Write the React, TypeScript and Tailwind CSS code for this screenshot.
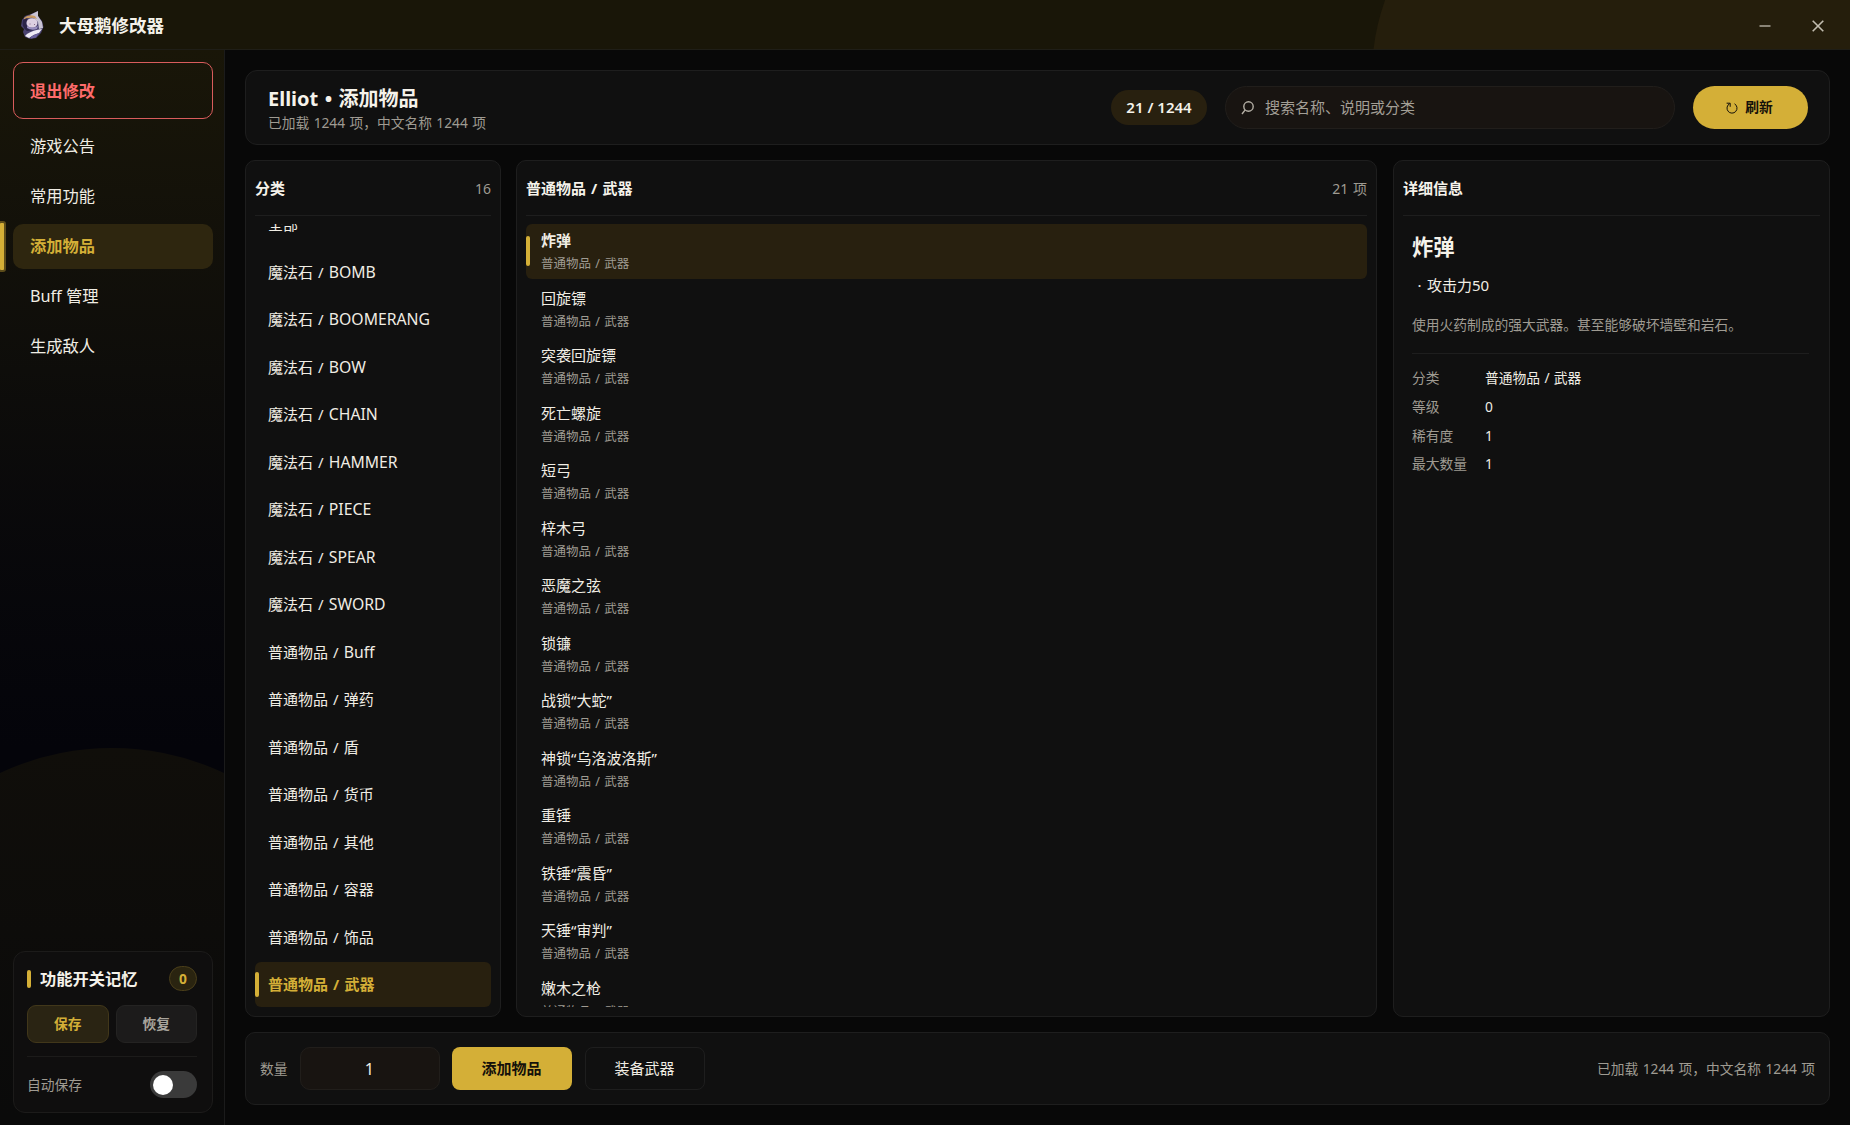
import { useState } from 'react';
import clsx from 'clsx';

const NAV_ITEMS = ['游戏公告', '常用功能', '添加物品', 'Buff 管理', '生成敌人'];

const CATEGORIES = [
  '全部',
  '魔法石 / BOMB',
  '魔法石 / BOOMERANG',
  '魔法石 / BOW',
  '魔法石 / CHAIN',
  '魔法石 / HAMMER',
  '魔法石 / PIECE',
  '魔法石 / SPEAR',
  '魔法石 / SWORD',
  '普通物品 / Buff',
  '普通物品 / 弹药',
  '普通物品 / 盾',
  '普通物品 / 货币',
  '普通物品 / 其他',
  '普通物品 / 容器',
  '普通物品 / 饰品',
  '普通物品 / 武器',
];

const ITEMS = [
  '炸弹',
  '回旋镖',
  '突袭回旋镖',
  '死亡螺旋',
  '短弓',
  '梓木弓',
  '恶魔之弦',
  '锁镰',
  '战锁“大蛇”',
  '神锁“乌洛波洛斯”',
  '重锤',
  '铁锤“震昏”',
  '天锤“审判”',
  '嫩木之枪',
];

const DETAILS = [
  { label: '分类', value: '普通物品 / 武器' },
  { label: '等级', value: '0' },
  { label: '稀有度', value: '1' },
  { label: '最大数量', value: '1' },
];

function Logo() {
  return (
    <svg viewBox="0 0 24 28" className="h-[28px] w-[24px]">
      <path d="M5 5 L11 3 L18 0 L18 5 L22 10 L23.500 16 L21 22 L16 27 L10 28 L5 26 L3 21 L4 18 L1 15 L2 9 Z" fill="#4a4270" />
      <path d="M10 4 L18 0 L18 5 L22 11 L23 17 L19 18 L18 11 L14 7 Z" fill="#c9c4d4" />
      <path d="M4 7 Q8 3 15 5 L17 8 Q10 5 4 9 Z" fill="#c79a62" />
      <path d="M3 9 Q7 6 8 8 L6 13 Q8 18 14 19 L7 20 Q1 16 3 9 Z" fill="#2b2448" />
      <ellipse cx="12" cy="12" rx="5.500" ry="4.800" fill="#ddd0e2" />
      <path d="M9.500 13 H10.500 M14 13.500 H15" stroke="#8a6d88" strokeWidth="1" />
      <path d="M7 15 Q12 18 18 15 L17 18 Q11 20 7 17 Z" fill="#9a8fc0" />
      <path d="M7 23 Q13 19 22 18 L19 22 Q14 23 9 27 L5 25 Z" fill="#eeebf5" />
      <path d="M11 25.500 L19 22 L16 26.500 L11 27.500 Z" fill="#6d64a0" />
    </svg>
  );
}

function TitleBar() {
  return (
    <header className="relative flex h-[50px] shrink-0 items-center justify-between overflow-hidden border-b border-[#1f1e17] bg-[#191608] pl-5">
      <div className="absolute top-[-182px] left-[1372px] h-[514px] w-[600px] rounded-[50%] bg-[#251e0c]" />
      <div className="relative flex items-center gap-[15px]">
        <Logo />
        <h1 className="pt-[2px] text-[17.5px] leading-none font-bold text-[#f5f2ea]">大母鹅修改器</h1>
      </div>
      <div className="relative flex h-full items-center pt-[2px]">
        <button className="flex h-full w-[40px] items-center justify-center">
          <svg viewBox="0 0 12 12" className="size-3" stroke="#c2bdb0" strokeWidth="1.3">
            <path d="M0.500 6 H11.500" />
          </svg>
        </button>
        <button className="flex h-full w-[65px] items-center justify-center">
          <svg viewBox="0 0 12 12" className="size-3" stroke="#c2bdb0" strokeWidth="1.6">
            <path d="M0.700 0.700 L11.300 11.300 M11.300 0.700 L0.700 11.300" />
          </svg>
        </button>
      </div>
    </header>
  );
}

function MemoryCard() {
  const [autoSave, setAutoSave] = useState(false);

  return (
    <div className="relative flex h-[162px] flex-col rounded-[12px] border border-[#1c1b1a] bg-[#0f0e0e] pt-[14px] pr-[15px] pl-[13px]">
      <div className="flex h-[25px] items-center">
        <span className="h-[18px] w-1 rounded-[2px] bg-[#d4af37]" />
        <span className="ml-[9px] pt-[2px] text-[16.25px] leading-none font-bold text-[#f5f2ea]">功能开关记忆</span>
        <span className="ml-auto flex h-[25px] w-7 items-center justify-center rounded-full border border-[#4a3e1a] bg-[#2a2410] text-[13.75px] leading-none font-bold text-[#d4af37]">
          0
        </span>
      </div>
      <div className="mt-[14px] flex gap-[7px]">
        <button className="h-[38px] flex-1 rounded-[9px] border border-[#41371a] bg-[#2a2413] text-[13.75px] font-bold text-[#d4af37]">
          保存
        </button>
        <button className="h-[38px] flex-1 rounded-[9px] border border-[#242322] bg-[#1c1b1b] text-[13.75px] font-bold text-[#a8a49c]">
          恢复
        </button>
      </div>
      <div className="mt-[13px] h-px bg-[#1c1b1a]" />
      <div className="mt-[14px] flex h-[27px] items-center justify-between">
        <span className="pt-px text-[13.75px] leading-none text-[#9f9b92]">自动保存</span>
        <button
          onClick={() => setAutoSave(!autoSave)}
          className={clsx(
            'flex h-[27px] w-[47px] items-center rounded-full px-[3px]',
            autoSave ? 'justify-end bg-[#d4af37]' : 'bg-[#3a3a3a]'
          )}
        >
          <span className="size-5 rounded-full bg-white" />
        </button>
      </div>
    </div>
  );
}

function Sidebar() {
  const [active, setActive] = useState('添加物品');

  return (
    <aside className="relative flex w-[225px] shrink-0 flex-col justify-between overflow-hidden border-r border-[#1b1b1b] bg-linear-to-b from-[#191608] via-[#04040a] via-65% to-[#04040a] pt-3 pr-[11px] pb-3 pl-[13px]">
      <div className="absolute top-[698px] left-[-151px] h-[526px] w-[526px] rounded-full bg-linear-to-b from-[#100e0a] to-[#0a0a0a] to-70%" />
      <nav className="relative flex flex-col gap-[5px]">
        <button className="h-[57px] rounded-[10px] border border-[#d95c5c] px-4 pt-[2px] text-left text-[16.25px] font-bold text-[#ff6b6b]">
          退出修改
        </button>
        {NAV_ITEMS.map((item) => (
          <button
            key={item}
            onClick={() => setActive(item)}
            className={clsx(
              'relative h-[45px] rounded-[10px] px-[17px] text-left text-[16.25px]',
              item === active ? 'bg-[#2e260f] font-bold text-[#d4af37]' : 'text-[#f0ede4]'
            )}
          >
            {item === active && (
              <span className="absolute top-[-3px] left-[-15px] h-[51px] w-2 rounded-[3px] border-2 border-[#5c4c1a] bg-[#d4af37]" />
            )}
            {item}
          </button>
        ))}
      </nav>
      <MemoryCard />
    </aside>
  );
}

function PageHeader() {
  return (
    <section className="flex h-[75px] shrink-0 items-center rounded-[12px] border border-[#1e1e1e] bg-[#101010] pr-[21px] pl-[22px]">
      <div className="flex flex-col gap-[4px] pt-[4px]">
        <h2 className="text-[20px] leading-[22px] font-bold text-[#f5f2ea] [word-spacing:1.2px]">Elliot • 添加物品</h2>
        <p className="text-[13.75px] leading-[18px] text-[#9f9b92] [word-spacing:0.8px]">已加载 1244 项，中文名称 1244 项</p>
      </div>
      <span className="ml-auto flex h-[35px] w-[96px] items-center justify-center rounded-full bg-[#28200f] text-[15px] font-semibold text-[#f5f2ea]">
        21 / 1244
      </span>
      <div className="ml-[18px] flex h-[43px] w-[450px] items-center rounded-full border border-[#211e1b] bg-[#181411] pl-[15px]">
        <svg viewBox="0 0 14 14" className="size-[14px]" fill="none" stroke="#b5b0a6" strokeWidth="1.4">
          <circle cx="7.500" cy="5.500" r="4.700" />
          <path d="M4.200 8.900 L1 13" />
        </svg>
        <span className="ml-[10px] text-[15px] text-[#a39f96]">搜索名称、说明或分类</span>
      </div>
      <button className="ml-[18px] flex h-[43px] w-[115px] items-center justify-center gap-[7px] rounded-full bg-[#d4af37] pr-[2px] text-[13.75px] font-bold text-[#14110a]">
        <svg viewBox="0 0 12 12" className="size-3" fill="none" stroke="#14110a" strokeWidth="1">
          <path d="M8.500 1.800 A5 5 0 1 1 3.700 1.700" />
          <path d="M0.600 1.200 H4.200 V4.800" />
        </svg>
        刷新
      </button>
    </section>
  );
}

function Panel({ title, extra, className, children }: {
  title: string;
  extra?: string;
  className?: string;
  children: React.ReactNode;
}) {
  return (
    <section className={clsx('flex min-h-0 flex-col rounded-[10px] border border-[#1e1e1e] bg-[#101010] px-[9px] pb-[9px]', className)}>
      <div className="flex h-[55px] shrink-0 items-center justify-between border-b border-[#1e1e1e] [word-spacing:1.2px]">
        <h3 className="text-[15px] font-bold text-[#f5f2ea]">{title}</h3>
        {extra && <span className="text-[14px] text-[#9f9b92]">{extra}</span>}
      </div>
      {children}
    </section>
  );
}

// latin part is set a touch larger so that it balances the CJK glyphs
function CategoryLabel({ name }: { name: string }) {
  const [group, sub] = name.split(' / ');
  if (!sub) return <span>{name}</span>;
  return (
    <span className="[word-spacing:1.2px]">
      {group} / <span className={clsx(/^[A-Za-z]+$/.test(sub) && 'text-[15.75px] leading-none')}>{sub}</span>
    </span>
  );
}

function CategoryPanel() {
  const [selected, setSelected] = useState('普通物品 / 武器');

  return (
    <Panel title="分类" extra="16" className="w-[256px] shrink-0">
      <div className="mt-2 flex min-h-0 flex-1 flex-col justify-end gap-[2.5px] overflow-hidden">
        {CATEGORIES.map((category) => (
          <button
            key={category}
            onClick={() => setSelected(category)}
            className={clsx(
              'relative flex h-[45px] shrink-0 items-center rounded-[6px] pl-[13px] text-[15px]',
              category === selected ? 'bg-[#28200f] font-bold text-[#d4af37]' : 'text-[#f0ede4]'
            )}
          >
            {category === selected && (
              <span className="absolute top-[10px] left-0 h-[25px] w-1 rounded-[2px] bg-[#d4af37]" />
            )}
            <CategoryLabel name={category} />
          </button>
        ))}
      </div>
    </Panel>
  );
}

function ItemPanel() {
  const [selected, setSelected] = useState('炸弹');

  return (
    <Panel title="普通物品 / 武器" extra="21 项" className="mr-px flex-1">
      <div className="mt-2 flex min-h-0 flex-1 flex-col gap-[2.5px] overflow-hidden">
        {ITEMS.map((item) => (
          <button
            key={item}
            onClick={() => setSelected(item)}
            className={clsx(
              'relative flex h-[55px] shrink-0 flex-col rounded-[6px] pt-[6px] pl-[15px] text-left',
              item === selected && 'bg-[#28200f]'
            )}
          >
            {item === selected && (
              <span className="absolute top-3 left-0 h-[30px] w-1 rounded-[2px] bg-[#d4af37]" />
            )}
            <span className={clsx('text-[15px] leading-[20px] text-[#f0ede4]', item === selected && 'font-bold')}>
              {item}
            </span>
            <span className="mt-[5px] text-[12.5px] leading-[18px] text-[#9f9b92] [word-spacing:1px]">普通物品 / 武器</span>
          </button>
        ))}
      </div>
    </Panel>
  );
}

function DetailPanel() {
  return (
    <Panel title="详细信息" className="w-[437px] shrink-0">
      <div className="flex flex-col pt-[18px] pr-[11px] pl-[9px]">
        <h2 className="text-[21.25px] leading-[26px] font-bold text-[#f5f2ea]">炸弹</h2>
        <p className="mt-[14px] text-[15px] leading-[22px] text-[#f0ede4]">
          <span className="inline-block w-[15px] text-center">·</span>攻击力50
        </p>
        <p className="mt-[18px] text-[13.75px] leading-[22px] text-[#9f9b92]">
          使用火药制成的强大武器。甚至能够破坏墙壁和岩石。
        </p>
        <div className="mt-[17px] h-px bg-[#1e1e1e]" />
        <dl className="mt-[10px] grid grid-cols-[73px_1fr] text-[13.75px] leading-[28.75px] [word-spacing:0.8px]">
          {DETAILS.map(({ label, value }) => (
            <div key={label} className="contents">
              <dt className="text-[#9f9b92]">{label}</dt>
              <dd className="text-[#f0ede4]">{value}</dd>
            </div>
          ))}
        </dl>
      </div>
    </Panel>
  );
}

function ActionBar() {
  return (
    <footer className="flex h-[73px] shrink-0 items-center rounded-[10px] border border-[#1e1e1e] bg-[#101010] px-[14px]">
      <span className="pt-px text-[13.75px] text-[#9f9b92]">数量</span>
      <input
        defaultValue="1"
        className="ml-[12px] h-[43px] w-[140px] rounded-[10px] border border-[#211e1b] bg-[#181411] text-center text-[16.25px] text-[#f0ede4]"
      />
      <button className="ml-[12px] h-[43px] w-[120px] rounded-[8px] bg-[#d4af37] text-[15px] font-bold text-[#14110a]">
        添加物品
      </button>
      <button className="ml-[13px] h-[43px] w-[120px] rounded-[8px] border border-[#1e1e1e] text-[15px] text-[#f0ede4]">
        装备武器
      </button>
      <span className="ml-auto pt-px text-[13.75px] text-[#9f9b92] [word-spacing:0.8px]">已加载 1244 项，中文名称 1244 项</span>
    </footer>
  );
}

export default function App() {
  return (
    <div className="flex h-[1125px] w-[1850px] flex-col overflow-hidden bg-[#080808] font-['Noto_Sans','Noto_Sans_CJK_SC',sans-serif]">
      <TitleBar />
      <div className="flex min-h-0 flex-1">
        <Sidebar />
        <main className="flex min-w-0 flex-1 flex-col gap-[15px] p-5">
          <PageHeader />
          <div className="flex min-h-0 flex-1 gap-[15px]">
            <CategoryPanel />
            <ItemPanel />
            <DetailPanel />
          </div>
          <ActionBar />
        </main>
      </div>
    </div>
  );
}
